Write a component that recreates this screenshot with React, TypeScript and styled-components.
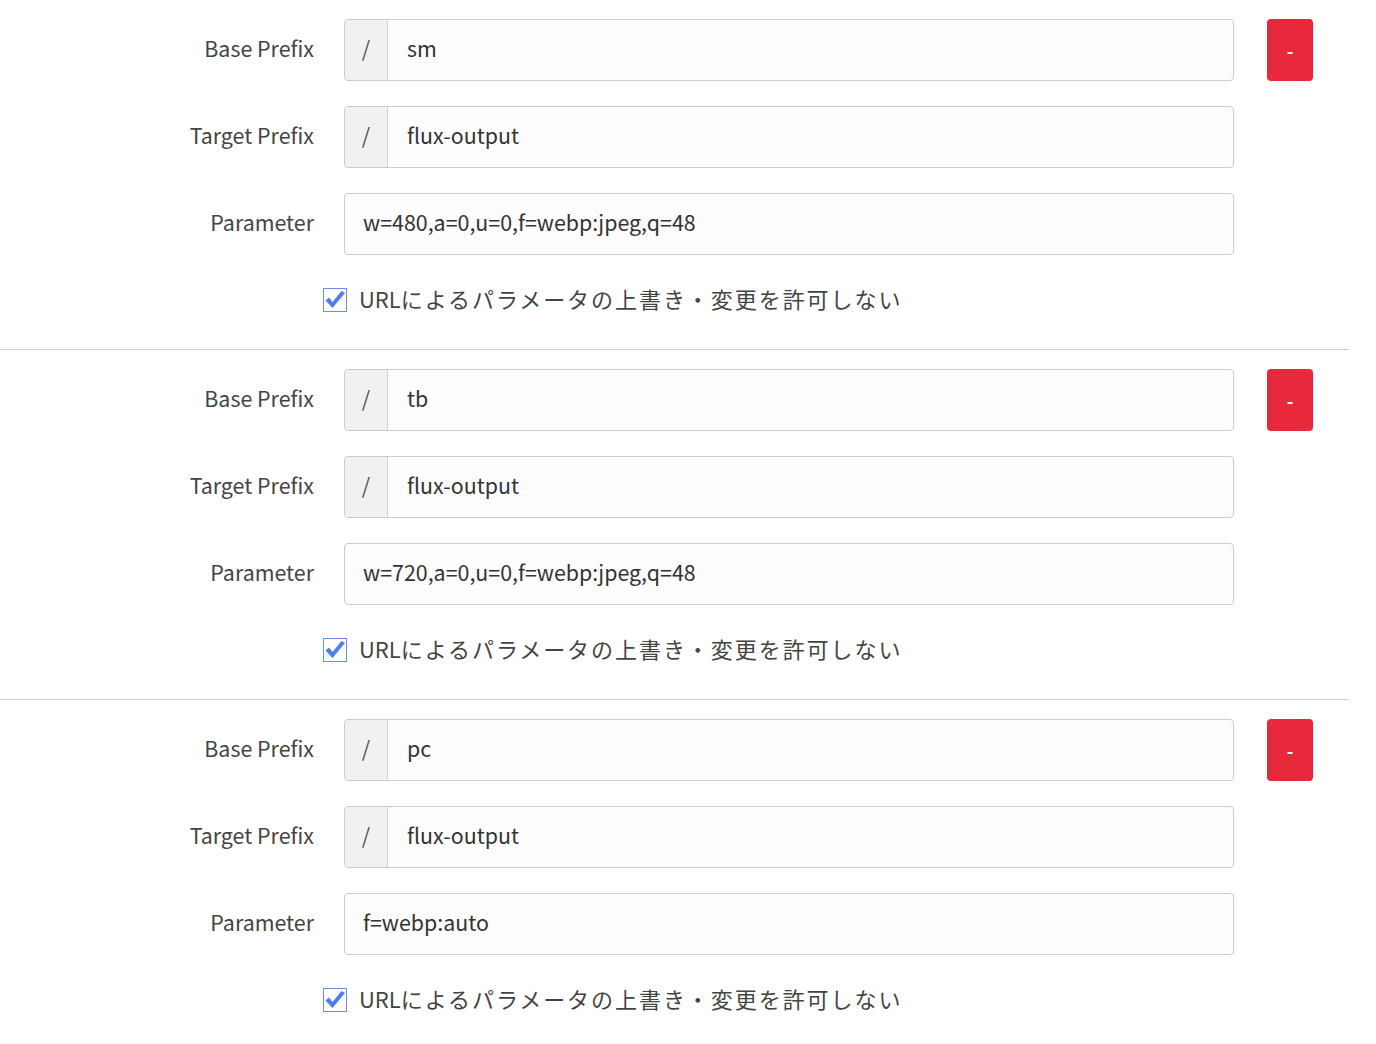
import React from "react";
import styled, { createGlobalStyle } from "styled-components";

const GlobalStyle = createGlobalStyle`
  html, body {
    margin: 0;
    padding: 0;
    background: #ffffff;
  }
  body {
    font-family: "Noto Sans CJK JP", "Noto Sans", sans-serif;
    color: #333;
  }
`;

const List = styled.div`
  width: 1349px;
`;

const Block = styled.section`
  display: flex;
  flex-direction: column;
  gap: 25px;
  padding: 19px 0 31px;
  border-bottom: 1px solid #cfcfcf;

  &:last-child {
    border-bottom: none;
  }
`;

const Row = styled.div`
  display: flex;
  align-items: center;
  height: 62px;
`;

const Label = styled.label`
  width: 314px;
  padding: 0 30px 5px 0;
  box-sizing: content-box;
  text-align: right;
  font-size: 21.4px;
  color: #444;
`;

const Field = styled.div`
  display: flex;
  width: 890px;
  height: 62px;
  box-sizing: border-box;
  border: 1px solid #cccccc;
  border-radius: 4px;
  background: #fdfdfd;
  overflow: hidden;
`;

const Addon = styled.span`
  width: 43px;
  display: flex;
  align-items: center;
  justify-content: center;
  padding-bottom: 5px;
  box-sizing: border-box;
  background: #f1f1f1;
  border-right: 1px solid #d4d4d4;
  font-size: 21.4px;
  color: #555;
`;

const Input = styled.input<{ $pad: number }>`
  flex: 1;
  border: none;
  outline: none;
  background: transparent;
  padding: 0 0 5px ${(p) => p.$pad}px;
  font-family: inherit;
  font-size: 21.4px;
  color: #333;
`;

const RemoveButton = styled.button`
  margin-left: 33px;
  width: 46px;
  height: 62px;
  border: none;
  border-radius: 4px;
  background: #e8283b;
  color: #fff;
  font-family: inherit;
  font-size: 18px;
  font-weight: 700;
  cursor: pointer;
`;

const CheckRow = styled.label`
  display: flex;
  align-items: center;
  gap: 12px;
  margin-top: 2px;
  padding-left: 323px;
  font-size: 22px;
  color: #444;
`;

const CheckText = styled.span`
  padding-bottom: 4px;
`;

const Wide = styled.span`
  letter-spacing: 1.95px;
`;

const Box = styled.span`
  width: 24px;
  height: 24px;
  display: inline-flex;
`;

function CheckIcon() {
  return (
    <Box>
      <svg width="24" height="24" viewBox="0 0 24 24">
        <rect x="0.5" y="0.5" width="23" height="23" fill="#fff" stroke="#6b8fe6" />
        <path d="M2.5 12.5 L9.5 20 L22 5 L18.5 3 L9.5 14 L6 9.5 Z" fill="#4b7ff0" />
      </svg>
    </Box>
  );
}

interface Rule {
  base: string;
  target: string;
  param: string;
}

const rules: Rule[] = [
  { base: "sm", target: "flux-output", param: "w=480,a=0,u=0,f=webp:jpeg,q=48" },
  { base: "tb", target: "flux-output", param: "w=720,a=0,u=0,f=webp:jpeg,q=48" },
  { base: "pc", target: "flux-output", param: "f=webp:auto" },
];

export default function App() {
  return (
    <>
      <GlobalStyle />
      <List>
        {rules.map((rule, index) => (
          <Block key={index}>
            <Row>
              <Label>Base Prefix</Label>
              <Field>
                <Addon>/</Addon>
                <Input $pad={19} defaultValue={rule.base} />
              </Field>
              <RemoveButton>-</RemoveButton>
            </Row>
            <Row>
              <Label>Target Prefix</Label>
              <Field>
                <Addon>/</Addon>
                <Input $pad={19} defaultValue={rule.target} />
              </Field>
            </Row>
            <Row>
              <Label>Parameter</Label>
              <Field>
                <Input $pad={18} defaultValue={rule.param} />
              </Field>
            </Row>
            <CheckRow>
              <CheckIcon />
              <CheckText>
                URL<Wide>によるパラメータの上書き・変更を許可しない</Wide>
              </CheckText>
            </CheckRow>
          </Block>
        ))}
      </List>
    </>
  );
}
